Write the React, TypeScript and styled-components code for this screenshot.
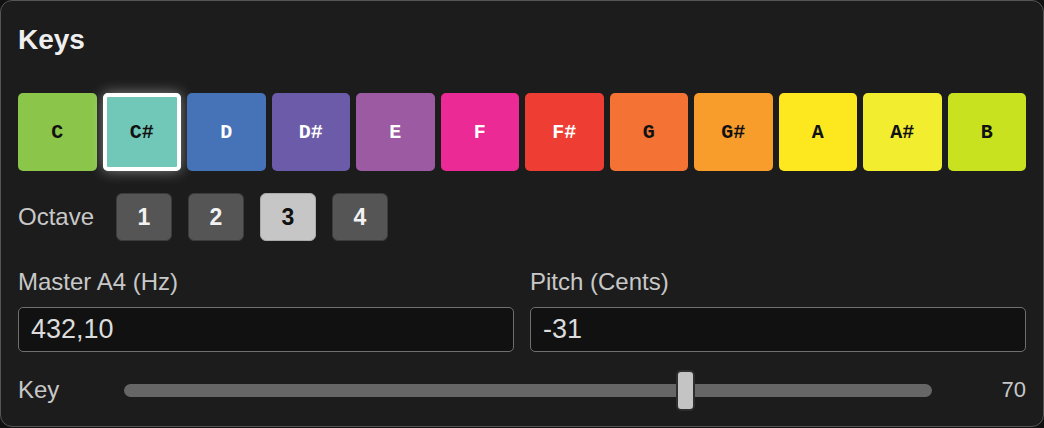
import React, { useState } from "react";
import styled, { createGlobalStyle, css } from "styled-components";

const GlobalStyle = createGlobalStyle`
  html, body {
    margin: 0;
    padding: 0;
    background: #111;
  }
  * { box-sizing: border-box; }
  body {
    font-family: "Liberation Sans", Arial, sans-serif;
  }
`;

const Panel = styled.section`
  width: 1044px;
  height: 427px;
  background: #1c1c1c;
  border: 1px solid #555;
  border-radius: 12px;
  padding: 20px 17px 17px;
  display: flex;
  flex-direction: column;
`;

const Title = styled.h2`
  margin: 0;
  font-size: 28px;
  line-height: 38px;
  font-weight: 700;
  color: #efefef;
`;

const Divider = styled.hr`
  margin: 13px 0 0;
  border: 0;
  height: 1px;
  background: #555;
`;

const KeyGrid = styled.div`
  margin-top: 21px;
  display: grid;
  grid-template-columns: repeat(12, 1fr);
  gap: 6px;
`;

const KeyButton = styled.button<{ $bg: string; $dark: boolean; $selected: boolean }>`
  height: 78px;
  border: 0;
  border-radius: 5px;
  background: ${(p) => p.$bg};
  color: ${(p) => (p.$dark ? "#fff" : "#111")};
  font-family: "Liberation Mono", "Courier New", monospace;
  font-weight: 700;
  font-size: 20px;
  padding: 0;
  cursor: pointer;
  ${(p) =>
    p.$selected &&
    css`
      outline: 4px solid #fff;
      outline-offset: -4px;
      box-shadow: 0 0 14px rgba(255, 255, 255, 0.45);
    `}
`;

const OctaveRow = styled.div`
  margin-top: 22px;
  display: flex;
  align-items: center;
  height: 48px;
`;

const RowLabel = styled.span`
  font-size: 24px;
  color: #c8c8c8;
`;

const OctaveLabel = styled(RowLabel)`
  width: 98px;
`;

const OctaveButtons = styled.div`
  display: flex;
  gap: 16px;
`;

const OctaveButton = styled.button<{ $active: boolean }>`
  width: 56px;
  height: 48px;
  border-radius: 6px;
  border: 1px solid ${(p) => (p.$active ? "#aaa" : "#3c3c3c")};
  background: ${(p) => (p.$active ? "#c6c6c6" : "#555")};
  color: ${(p) => (p.$active ? "#111" : "#f2f2f2")};
  font-family: "Liberation Sans", Arial, sans-serif;
  font-weight: 700;
  font-size: 23px;
  padding: 0;
  cursor: pointer;
`;

const Fields = styled.div`
  margin-top: 27px;
  display: grid;
  grid-template-columns: 1fr 1fr;
  gap: 16px;
`;

const Field = styled.label`
  display: flex;
  flex-direction: column;
  gap: 12px;
`;

const FieldLabel = styled.span`
  font-size: 24px;
  line-height: 27px;
  color: #c8c8c8;
`;

const TextInput = styled.input`
  height: 45px;
  width: 100%;
  background: #111;
  border: 1px solid #6f6f6f;
  border-radius: 5px;
  color: #dcdcdc;
  font-family: "Liberation Sans", Arial, sans-serif;
  font-size: 27px;
  padding: 0 12px;
  outline: none;
`;

const SliderRow = styled.div`
  margin-top: 17px;
  height: 42px;
  display: flex;
  align-items: center;
`;

const SliderLabel = styled(RowLabel)`
  width: 106px;
`;

const Range = styled.input`
  -webkit-appearance: none;
  appearance: none;
  flex: 1;
  margin: 0;
  height: 42px;
  background: transparent;
  cursor: pointer;

  &::-webkit-slider-runnable-track {
    height: 13px;
    background: #666;
    border-radius: 7px;
  }
  &::-webkit-slider-thumb {
    -webkit-appearance: none;
    width: 19px;
    height: 41px;
    margin-top: -14px;
    background: #c4c4c4;
    border: 2px solid #2e2e2e;
    border-radius: 5px;
  }
`;

const SliderValue = styled.span`
  width: 94px;
  text-align: right;
  font-size: 22px;
  color: #c8c8c8;
`;

const KEYS: { name: string; bg: string; dark: boolean }[] = [
  { name: "C", bg: "#8bc54a", dark: false },
  { name: "C#", bg: "#71c8b8", dark: false },
  { name: "D", bg: "#4672b8", dark: true },
  { name: "D#", bg: "#6b5ba8", dark: true },
  { name: "E", bg: "#9c5aa3", dark: true },
  { name: "F", bg: "#ec2a95", dark: true },
  { name: "F#", bg: "#ee3d33", dark: true },
  { name: "G", bg: "#f37234", dark: false },
  { name: "G#", bg: "#f89c2c", dark: false },
  { name: "A", bg: "#fde81f", dark: false },
  { name: "A#", bg: "#f2ed2e", dark: false },
  { name: "B", bg: "#c9e21f", dark: false },
];

export default function App() {
  const [selected, setSelected] = useState("C#");
  const [octave, setOctave] = useState(3);
  const [master, setMaster] = useState("432,10");
  const [pitch, setPitch] = useState("-31");
  const [key, setKey] = useState(70);

  return (
    <>
      <GlobalStyle />
      <Panel>
        <Title>Keys</Title>
        <Divider />
        <KeyGrid>
          {KEYS.map((k) => (
            <KeyButton
              key={k.name}
              $bg={k.bg}
              $dark={k.dark}
              $selected={selected === k.name}
              onClick={() => setSelected(k.name)}
            >
              {k.name}
            </KeyButton>
          ))}
        </KeyGrid>
        <OctaveRow>
          <OctaveLabel>Octave</OctaveLabel>
          <OctaveButtons>
            {[1, 2, 3, 4].map((o) => (
              <OctaveButton key={o} $active={octave === o} onClick={() => setOctave(o)}>
                {o}
              </OctaveButton>
            ))}
          </OctaveButtons>
        </OctaveRow>
        <Fields>
          <Field>
            <FieldLabel>Master A4 (Hz)</FieldLabel>
            <TextInput value={master} onChange={(e) => setMaster(e.target.value)} />
          </Field>
          <Field>
            <FieldLabel>Pitch (Cents)</FieldLabel>
            <TextInput value={pitch} onChange={(e) => setPitch(e.target.value)} />
          </Field>
        </Fields>
        <SliderRow>
          <SliderLabel>Key</SliderLabel>
          <Range
            type="range"
            min={0}
            max={100}
            value={key}
            onChange={(e) => setKey(Number(e.target.value))}
          />
          <SliderValue>{key}</SliderValue>
        </SliderRow>
      </Panel>
    </>
  );
}
